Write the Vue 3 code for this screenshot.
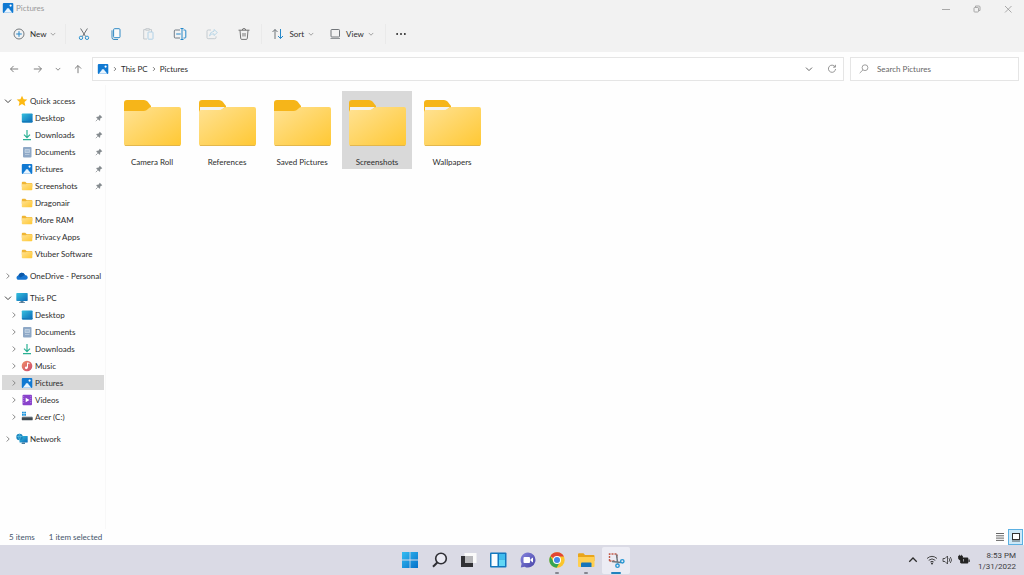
<script setup>
import { ref } from 'vue'

const search = ref('')
const selected = ref('Screenshots')

const tools = [
  { id: 'cut', label: 'Cut' },
  { id: 'copy', label: 'Copy' },
  { id: 'paste', label: 'Paste', off: true },
  { id: 'rename', label: 'Rename' },
  { id: 'share', label: 'Share', off: true },
  { id: 'trash', label: 'Delete' },
]

const groups = [
  {
    name: 'Quick access', icon: 'star', open: true,
    children: [
      { name: 'Desktop', icon: 'desktop', pin: true },
      { name: 'Downloads', icon: 'download', pin: true },
      { name: 'Documents', icon: 'document', pin: true },
      { name: 'Pictures', icon: 'picture', pin: true },
      { name: 'Screenshots', icon: 'folder', pin: true },
      { name: 'Dragonair', icon: 'folder' },
      { name: 'More RAM', icon: 'folder' },
      { name: 'Privacy Apps', icon: 'folder' },
      { name: 'Vtuber Software', icon: 'folder' },
    ],
  },
  { name: 'OneDrive - Personal', icon: 'cloud', children: [] },
  {
    name: 'This PC', icon: 'pc', open: true,
    children: [
      { name: 'Desktop', icon: 'desktop', more: true },
      { name: 'Documents', icon: 'document', more: true },
      { name: 'Downloads', icon: 'download', more: true },
      { name: 'Music', icon: 'music', more: true },
      { name: 'Pictures', icon: 'picture', more: true, current: true },
      { name: 'Videos', icon: 'video', more: true },
      { name: 'Acer (C:)', icon: 'drive', more: true },
    ],
  },
  { name: 'Network', icon: 'network', children: [] },
]

const folders = [
  { name: 'Camera Roll' },
  { name: 'References', paper: true },
  { name: 'Saved Pictures' },
  { name: 'Screenshots', paper: true },
  { name: 'Wallpapers', paper: true },
]

const apps = [
  { id: 'start', label: 'Start' },
  { id: 'find', label: 'Search' },
  { id: 'tasks', label: 'Task view' },
  { id: 'widgets', label: 'Widgets' },
  { id: 'chat', label: 'Chat' },
  { id: 'chrome', label: 'Chrome', running: true },
  { id: 'explorer', label: 'File Explorer', running: true },
  { id: 'snip', label: 'Snipping Tool', active: true },
]
</script>

<template>
  <div class="window">
    <svg class="sprite" width="0" height="0" aria-hidden="true">
      <defs>
        <linearGradient id="g-folder" x1="0" y1="0" x2="1" y2="1">
          <stop offset="0" stop-color="#ffe294" /><stop offset="1" stop-color="#ffc833" />
        </linearGradient>
        <linearGradient id="g-desk" x1="0" y1="0" x2="1" y2="1">
          <stop offset="0" stop-color="#35c1de" /><stop offset="1" stop-color="#0b69b8" />
        </linearGradient>
        <linearGradient id="g-music" x1="0" y1="0" x2="1" y2="1">
          <stop offset="0" stop-color="#f09068" /><stop offset="1" stop-color="#cc4a6e" />
        </linearGradient>
        <linearGradient id="g-win" x1="0" y1="0" x2="1" y2="1">
          <stop offset="0" stop-color="#35bdf2" /><stop offset="1" stop-color="#0470c9" />
        </linearGradient>
        <linearGradient id="g-chat" x1="0" y1="0" x2="1" y2="1">
          <stop offset="0" stop-color="#8483dd" /><stop offset="1" stop-color="#4a46a8" />
        </linearGradient>
      </defs>
      <symbol id="i-star" viewBox="0 0 12 12"><path d="M6 .8l1.6 3.4 3.7.4-2.8 2.5.8 3.8L6 9.1 2.7 10.9l.8-3.8L.7 4.6l3.7-.4z" fill="#fdb913" /></symbol>
      <symbol id="i-desktop" viewBox="0 0 12 12"><rect x=".8" y="1.5" width="10.8" height="9" rx=".8" fill="url(#g-desk)" /><path d="M1 9h10.500v.8q0 .7-.7.7H1.500z" fill="#1379b8" /></symbol>
      <symbol id="i-download" viewBox="0 0 12 12"><path d="M6 1v7.500M3 5.600l3 3 3-3M2 10.700h8" fill="none" stroke="#2ab093" stroke-width="1.200" /></symbol>
      <symbol id="i-document" viewBox="0 0 12 12"><rect x="2" y="1" width="8.500" height="10.500" rx="1" fill="#8ea8c6" /><path d="M4 3.500h4.500v3H4zM4 8.500h4.500" fill="#a9c0d8" stroke="#d0deeb" stroke-width=".6" /></symbol>
      <symbol id="i-picture" viewBox="0 0 12 12"><rect x=".8" y="1" width="10.500" height="10" rx="1" fill="#1079d2" /><path d="M1.800 10.800l3.400-4.300q.8-.8 1.600 0l3.500 4.300z" fill="#e8f5ff" /><circle cx="8.600" cy="3.600" r="1.100" fill="#fff" /></symbol>
      <symbol id="i-folder" viewBox="0 0 12 12"><path d="M.8 2.700q0-.9.9-.9h2.600l1.200 1.200h5q.8 0 .8.800v3H.8z" fill="#efb534" /><path d="M.8 4.200h4L6 3.400h4.500q.8 0 .8.800v5.200q0 .8-.8.800H1.600q-.8 0-.8-.8z" fill="url(#g-folder)" /></symbol>
      <symbol id="i-cloud" viewBox="0 0 12 12"><path d="M2.700 9.800C-.2 9.800-.2 5.600 2.700 5.500 3.400 2 7.800 1.800 8.800 5c3.800 0 3.800 4.800.6 4.800z" fill="#1675d1" /><path d="M2.200 5.600C3.500 1.500 8 2 8.800 5L4.300 7.600z" fill="#0c58a8" /></symbol>
      <symbol id="i-pc" viewBox="0 0 12 12"><rect x=".3" y="1" width="11.400" height="8" rx=".7" fill="url(#g-desk)" /><path d="M4.500 9h3v1.300H9V11H3v-.7h1.500z" fill="#587f9b" /></symbol>
      <symbol id="i-music" viewBox="0 0 12 12"><circle cx="6" cy="6" r="5.300" fill="url(#g-music)" /><path d="M6.500 7.800V2.800l2 .8" fill="none" stroke="#fff" stroke-width="1" /><circle cx="5.300" cy="7.800" r="1.400" fill="#fff" /></symbol>
      <symbol id="i-video" viewBox="0 0 12 12"><rect x="1.500" y=".8" width="9.500" height="10.400" rx="1" fill="#8942cb" /><path d="M2.700 2v8M9.800 2v8" stroke="#bb8be8" stroke-width=".8" stroke-dasharray="1 1" /><path d="M4.700 3.800L8.500 6 4.700 8.200z" fill="#fff" /></symbol>
      <symbol id="i-drive" viewBox="0 0 12 12"><path d="M1 .800h1.800v1.800H1zM3.200.8H5v1.800H3.200zM1 3h1.800v1.800H1zM3.200 3H5v1.800H3.200z" fill="#1993dd" /><path d="M1.500 5.500h9.500l.7 1H.8z" fill="#99a2a9" /><rect x=".8" y="6.300" width="10.900" height="2.900" rx=".4" fill="#3f4950" /></symbol>
      <symbol id="i-network" viewBox="0 0 12 12"><rect x="3.500" y="3" width="8.200" height="6.500" rx=".5" fill="url(#g-desk)" /><path d="M6 9.500h3V11H5.500z" fill="#487d9d" /><circle cx="3.500" cy="4" r="3.200" fill="#1783bd" /><path d="M.5 3.500h6M3.500.8q-2 3 0 6.400q2-3.400 0-6.400" fill="none" stroke="#63c6e8" stroke-width=".6" /></symbol>
      <symbol id="i-pin" viewBox="0 0 12 12"><path d="M7.200 1.200l3.700 3.600-.8.800-.8-.1-1.600 1.700.1 2-1 1-5-5 1-1 2 .1 1.700-1.700-.1-.7z" fill="#858b8f" /><path d="M4.200 7.800L1.200 10.800" stroke="#858b8f" stroke-width="1.100" /></symbol>
      <symbol id="i-down" viewBox="0 0 8 8"><path d="M1 2.600l3 3 3-3" fill="none" stroke="currentColor" stroke-width="1" /></symbol>
      <symbol id="i-right" viewBox="0 0 8 8"><path d="M2.700 1.500l2.500 2.500-2.500 2.500" fill="none" stroke="currentColor" stroke-width="1" /></symbol>
      <symbol id="i-new" viewBox="0 0 14 14"><circle cx="7" cy="7" r="5" fill="none" stroke="#686d72" stroke-width=".9" /><path d="M7 4.200v5.600M4.200 7h5.600" stroke="#2687c9" stroke-width="1" /></symbol>
      <symbol id="i-cut" viewBox="0 0 14 14"><path d="M3.600 1.500l5 8M10.400 1.500l-5 8" stroke="#5d6267" stroke-width=".9" /><g fill="none" stroke="#2d92cf" stroke-width="1"><circle cx="4" cy="10.800" r="1.700" /><circle cx="10" cy="10.800" r="1.700" /></g></symbol>
      <symbol id="i-copy" viewBox="0 0 14 14"><rect x="4.600" y="1.700" width="6.400" height="9" rx="1" fill="#fafafa" stroke="#2e89c5" stroke-width="1" /><path d="M3 3.300v7.200q0 2 2 2h4" fill="none" stroke="#3b8bc0" stroke-width="1" /></symbol>
      <symbol id="i-paste" viewBox="0 0 14 14"><path d="M6 12H2.700V2.600h2M8.500 2.600h2V5M4.800 1.700h3.600v1.500H4.800z" fill="none" stroke="#bfc5c9" stroke-width=".9" /><rect x="7" y="5" width="5" height="7.200" rx=".6" fill="none" stroke="#a8cde5" stroke-width=".9" /></symbol>
      <symbol id="i-rename" viewBox="0 0 14 14"><path d="M7 3H2.300q-1 0-1 1v6q0 1 1 1H7" fill="none" stroke="#65717a" stroke-width=".9" /><path d="M10.500 3H12q.8 0 .8.800v6.400q0 .8-.8.800h-1.500M9 1.500v11M7.500 1.500h3M7.500 12.500h3M3.200 7h4.500" fill="none" stroke="#2488ca" stroke-width="1" /></symbol>
      <symbol id="i-share" viewBox="0 0 14 14"><path d="M6 3H3.200q-1.200 0-1.200 1.200v6.300q0 1.200 1.200 1.200h6.600q1.200 0 1.200-1.200V9.400" fill="none" stroke="#bec6cc" stroke-width=".9" /><path d="M9 2.500l3.400 3L9 8.500V6.800Q6 6.600 4.500 8.900 4.800 4.800 9 4.200z" fill="none" stroke="#add0e5" stroke-width=".8" /></symbol>
      <symbol id="i-trash" viewBox="0 0 14 14"><path d="M1.500 3.200h11M5.300 3.200q0-1.700 1.700-1.700t1.700 1.700M3 3.400l.7 8q.1 1 1.100 1h4.400q1 0 1.100-1l.7-8M6 6v3.500M8 6v3.500" fill="none" stroke="#666" stroke-width=".9" /></symbol>
      <symbol id="i-sort" viewBox="0 0 14 14"><path d="M4 12V2.500M1.500 5L4 2.500 6.500 5" fill="none" stroke="#60676c" stroke-width=".9" /><path d="M9.500 2v9.500M7 9l2.500 2.500L12 9" fill="none" stroke="#2688c9" stroke-width="1" /></symbol>
      <symbol id="i-view" viewBox="0 0 14 14"><rect x="3" y="2.500" width="8.500" height="7.500" rx=".8" fill="none" stroke="#62676b" stroke-width=".9" /><path d="M2.500 11.500h9.500" stroke="#777c80" stroke-width=".8" /></symbol>
      <symbol id="i-dots" viewBox="0 0 14 14"><g fill="#252525"><circle cx="2.500" cy="7" r="1.100" /><circle cx="7" cy="7" r="1.100" /><circle cx="11.500" cy="7" r="1.100" /></g></symbol>
      <symbol id="i-arrow" viewBox="0 0 12 12"><path d="M11 6H2M5.500 2.300L1.800 6l3.700 3.700" fill="none" stroke="currentColor" stroke-width="1" /></symbol>
      <symbol id="i-refresh" viewBox="0 0 12 12"><path d="M9.600 3.300A4.300 4.300 0 1 0 10.300 6M10.100 1v2.800H7.300" fill="none" stroke="#737373" stroke-width=".9" /></symbol>
      <symbol id="i-lens" viewBox="0 0 12 12"><circle cx="7" cy="4.700" r="2.900" fill="none" stroke="#888" stroke-width=".8" /><path d="M5 6.800l-3.300 3.300" stroke="#888" stroke-width=".8" /></symbol>
      <symbol id="i-start" viewBox="0 0 20 20"><path d="M2 2h7.600v7.600H2zM10.400 2H18v7.600h-7.600zM2 10.400h7.600V18H2zM10.400 10.400H18V18h-7.600z" fill="url(#g-win)" /></symbol>
      <symbol id="i-find" viewBox="0 0 20 20"><circle cx="11" cy="8.500" r="5.300" fill="#e9e9f2" stroke="#2e2e34" stroke-width="1.600" /><path d="M7.300 12.500L3 16.800" stroke="#2e2e34" stroke-width="2" /></symbol>
      <symbol id="i-tasks" viewBox="0 0 20 20"><rect x="5.500" y="3" width="12" height="10" fill="#fafafa" /><path d="M5.500 6H14v7H5.500z" fill="#b7b7ba" /><path d="M2 6h4v7h8v4H2z" fill="#303034" /></symbol>
      <symbol id="i-widgets" viewBox="0 0 20 20"><rect x="2" y="2.500" width="16.500" height="15" rx="1" fill="#1277be" /><rect x="3.500" y="4" width="6" height="12" fill="#fafdff" /><path d="M11 4h6v5.500h-6z" fill="#40bced" /><path d="M11 9.500h6V16h-6z" fill="#61d7f5" /></symbol>
      <symbol id="i-chat" viewBox="0 0 20 20"><path d="M10 2.500a7.500 7.500 0 1 1-3.400 14.200L2.800 17.500l.8-3.700A7.500 7.500 0 0 1 10 2.500z" fill="url(#g-chat)" /><rect x="5.500" y="7" width="6.500" height="6" rx="1" fill="#fff" /><path d="M12.500 9.200l2.500-1.800v5.200l-2.500-1.800z" fill="#fff" /></symbol>
      <symbol id="i-chrome" viewBox="0 0 20 20"><circle cx="10" cy="10" r="7.700" fill="#fbc52c" /><path d="M10 10L3.300 6.200A7.700 7.700 0 0 1 17 6.500H10z" fill="#e24434" /><path d="M3.300 6.200A7.700 7.700 0 0 0 9.600 17.700L13 12l-5.800 1z" fill="#36a554" /><circle cx="10" cy="10" r="4" fill="#fff" /><circle cx="10" cy="10" r="3" fill="#4287e8" /></symbol>
      <symbol id="i-explorer" viewBox="0 0 20 20"><path d="M2 4.200q0-1 1-1h4.500L9 5h8.500q1 0 1 1v5H2z" fill="#e9a51b" /><path d="M2 7h16.500v9q0 1-1 1H3q-1 0-1-1z" fill="#ffcf51" /><path d="M5 17v-3.500q0-1 1-1h8.500q1 0 1 1V17z" fill="#1474bb" /></symbol>
      <symbol id="i-snip" viewBox="0 0 20 20"><path d="M3.500 11V4h7.500v4M3.500 11h5" fill="none" stroke="#c25a49" stroke-width="1.400" stroke-dasharray="2 1" /><path d="M10.500 4.500l1.200 9M6 11.500l9 1" fill="none" stroke="#6e777e" stroke-width="1.500" /><g fill="none" stroke="#2696d3" stroke-width="1.400"><circle cx="16.300" cy="11.300" r="1.700" /><circle cx="11.500" cy="15.700" r="1.700" /></g></symbol>
      <symbol id="i-wifi" viewBox="0 0 12 12"><path d="M1 4.500q5-4.300 10 0M2.700 6.300q3.300-2.800 6.600 0M4.300 8q1.700-1.400 3.400 0" fill="none" stroke="#333" stroke-width=".9" /><circle cx="6" cy="9.600" r="1" fill="#333" /></symbol>
      <symbol id="i-sound" viewBox="0 0 12 12"><path d="M1 4.500h2L5.500 2v8L3 7.500H1zM7 4.200q1.500 1.800 0 3.600M8.300 3q2.600 3 0 6" fill="none" stroke="#333" stroke-width=".8" /></symbol>
      <symbol id="i-battery" viewBox="0 0 12 12"><rect x="2.500" y="3.500" width="7.800" height="6" rx="1" fill="#222" /><path d="M10.500 5.500h1.200V8h-1.200z" fill="#222" /><path d="M.5 2h4v2.500q-.5 1.500-2 1.500t-2-1.500zM1.500.8V2M3.500.8V2M2.500 6v3" fill="#222" stroke="#222" stroke-width=".7" /><path d="M5.500 5v2.500" stroke="#c9c9d0" stroke-width=".7" /></symbol>
    </svg>

    <header class="chrome">
      <div class="titlebar">
        <svg class="ic12"><use href="#i-picture" /></svg>
        <h1>Pictures</h1>
        <div class="caption">
          <button aria-label="Minimize"><svg class="ic12" viewBox="0 0 12 12"><path d="M2 6.500h8" /></svg></button>
          <button aria-label="Restore"><svg class="ic12" viewBox="0 0 12 12"><rect x="3" y="4.500" width="4.500" height="4.500" rx=".7" /><path d="M4.500 4V3h3.500q1 0 1 1v3.500H8" /></svg></button>
          <button aria-label="Close"><svg class="ic12" viewBox="0 0 12 12"><path d="M3 3l6.500 6.500M9.500 3L3 9.500" /></svg></button>
        </div>
      </div>
      <div class="toolbar">
        <button class="wide"><svg class="ic14"><use href="#i-new" /></svg>New<svg class="ic6"><use href="#i-down" /></svg></button>
        <i class="rule"></i>
        <button v-for="t in tools" :key="t.id" class="tool" :aria-label="t.label" :disabled="t.off">
          <svg class="ic14"><use :href="'#i-' + t.id" /></svg>
        </button>
        <i class="rule"></i>
        <button class="wide"><svg class="ic14"><use href="#i-sort" /></svg>Sort<svg class="ic6"><use href="#i-down" /></svg></button>
        <button class="wide"><svg class="ic14"><use href="#i-view" /></svg>View<svg class="ic6"><use href="#i-down" /></svg></button>
        <i class="rule"></i>
        <button class="tool" aria-label="See more"><svg class="ic12"><use href="#i-dots" /></svg></button>
      </div>
    </header>

    <nav class="address" aria-label="Location">
      <div class="history">
        <button aria-label="Back"><svg class="ic10"><use href="#i-arrow" /></svg></button>
        <button aria-label="Forward"><svg class="ic10 flip"><use href="#i-arrow" /></svg></button>
        <button aria-label="Recent locations"><svg class="ic6"><use href="#i-down" /></svg></button>
        <button aria-label="Up"><svg class="ic10 up"><use href="#i-arrow" /></svg></button>
      </div>
      <div class="path">
        <svg class="ic12"><use href="#i-picture" /></svg>
        <svg class="ic6"><use href="#i-right" /></svg>
        <a href="#pc">This PC</a>
        <svg class="ic6"><use href="#i-right" /></svg>
        <a href="#pictures">Pictures</a>
        <button class="first" aria-label="Previous locations"><svg class="ic8"><use href="#i-down" /></svg></button>
        <button aria-label="Refresh"><svg class="ic10"><use href="#i-refresh" /></svg></button>
      </div>
      <label class="search">
        <svg class="ic12"><use href="#i-lens" /></svg>
        <input v-model="search" type="text" placeholder="Search Pictures" aria-label="Search Pictures" />
      </label>
    </nav>

    <div class="body">
      <aside class="tree">
        <ul>
          <li v-for="g in groups" :key="g.name">
            <a class="row" href="#">
              <svg class="ic8 twist" :class="{ open: g.open }"><use :href="g.open ? '#i-down' : '#i-right'" /></svg>
              <svg class="ic12"><use :href="'#i-' + g.icon" /></svg>
              <span>{{ g.name }}</span>
            </a>
            <ul v-if="g.children.length" class="sub">
              <li v-for="c in g.children" :key="c.name">
                <a class="row" :class="{ current: c.current }" href="#">
                  <svg class="ic8 twist"><use v-if="c.more" href="#i-right" /></svg>
                  <svg class="ic12"><use :href="'#i-' + c.icon" /></svg>
                  <span>{{ c.name }}</span>
                  <svg v-if="c.pin" class="ic8 pin"><use href="#i-pin" /></svg>
                </a>
              </li>
            </ul>
          </li>
        </ul>
      </aside>
      <main class="files">
        <button v-for="f in folders" :key="f.name" class="tile" :class="{ selected: f.name === selected }" @click="selected = f.name">
          <svg class="big" viewBox="0 0 57 46" aria-hidden="true">
            <path d="M0 3q0-3 3-3h17q2 0 3.500 1.500L27 6v8H0z" fill="#f6b519" />
            <path v-if="f.paper" d="M1 7h25l-5 4H1z" fill="#f3f3f3" />
            <path :d="f.paper ? 'M0 12q0-2 2-2h18q2 0 4-1.500l1-.8q1-.7 3-.7h27q2 0 2 2v35q0 2-2 2H2q-2 0-2-2z' : 'M0 11h20q2 0 4-2l1-1q1-1 3-1h27q2 0 2 2v35q0 2-2 2H2q-2 0-2-2z'" fill="url(#g-folder)" />
            <path d="M1 45.500h55" stroke="#dcb04a" stroke-width=".8" />
          </svg>
          <span>{{ f.name }}</span>
        </button>
      </main>
    </div>

    <footer class="status">
      <span>5 items</span><span>1 item selected</span>
      <div class="modes">
        <button aria-label="Details"><svg class="ic12" viewBox="0 0 12 12"><path d="M2 2.500h8M2 4.800h8M2 7.100h8M2 9.400h8" stroke="#555" stroke-width=".9" /></svg></button>
        <button class="on" aria-label="Large icons"><svg class="ic12" viewBox="0 0 12 12"><rect x="2.500" y="2.500" width="7" height="6" fill="#fff" stroke="#333" /><path d="M2 10h8" stroke="#333" stroke-width=".8" /></svg></button>
      </div>
    </footer>

    <div class="taskbar">
      <div class="apps">
        <button v-for="a in apps" :key="a.id" :class="{ active: a.active, running: a.running }" :aria-label="a.label">
          <svg class="ic20"><use :href="'#i-' + a.id" /></svg>
        </button>
      </div>
      <div class="tray">
        <button aria-label="Hidden icons"><svg class="ic10 turn"><use href="#i-down" /></svg></button>
        <button class="quick" aria-label="Network, volume, battery">
          <svg class="ic12"><use href="#i-wifi" /></svg>
          <svg class="ic12"><use href="#i-sound" /></svg>
          <svg class="ic12"><use href="#i-battery" /></svg>
        </button>
        <time datetime="2022-01-31T20:53">8:53 PM<br />1/31/2022</time>
      </div>
    </div>
  </div>
</template>

<style>
body { background: #fefefe; }
</style>

<style scoped>
.window { display: flex; flex-direction: column; min-height: 100vh; font: 8px/12px Lato, "Open Sans", sans-serif; color: #2c2c2c; background: #fefefe; }
.window * { box-sizing: border-box; }
.sprite { position: absolute; }
svg { display: block; flex: none; overflow: visible; }
button { display: flex; align-items: center; justify-content: center; padding: 0; border: 0; background: none; font: inherit; color: inherit; }
a { color: inherit; text-decoration: none; }
ul { margin: 0; padding: 0; list-style: none; }
.ic6 { width: 6px; height: 6px; }
.ic8 { width: 8px; height: 8px; }
.ic10 { width: 10px; height: 10px; }
.ic12 { width: 12px; height: 12px; }
.ic14 { width: 14px; height: 14px; }
.ic20 { width: 20px; height: 20px; }
.flip { transform: rotate(180deg); }
.up { transform: rotate(90deg); }
.turn { transform: rotate(180deg); }

.chrome { background: #f2f2f2; }
.titlebar { display: flex; align-items: flex-start; height: 16px; padding: 2px 1px 0 2px; }
.titlebar h1 { margin: 0 0 0 2px; font-size: 8px; line-height: 12px; font-weight: 400; color: #999; }
.caption { display: flex; margin-left: auto; }
.caption button { width: 31px; height: 14px; }
.caption svg { fill: none; stroke: #969696; stroke-width: .8; }
.toolbar { display: flex; align-items: center; height: 36px; padding-left: 7px; }
.wide { gap: 4px; height: 24px; padding: 0 5px; }
.wide .ic6 { color: #888; }
.rule { width: 1px; height: 20px; margin: 0 1px; background: #eaeaea; }
.rule:nth-of-type(1) { margin-left: 4px; margin-right: 2px; }
.rule + .wide { padding-left: 8px; }
.wide + .wide { padding-left: 9px; }
.wide + .rule:last-of-type { margin-left: 6px; }
.tool { width: 32px; height: 24px; }
.rule:last-of-type + .tool { width: 28px; }

.address { display: flex; align-items: center; padding: 5px 5px 4px; height: 33px; }
.history { display: grid; grid-template-columns: 18px 30px 10px 29px; height: 22px; color: #666; }
.path, .search { display: flex; align-items: center; height: 24px; border: 1px solid #e5e5e5; background: #fff; }
.path { flex: 1; gap: 3px; padding: 0 5px 0 4px; }
.path .ic6 { color: #555; }
.path .first { margin-left: auto; margin-right: 8px; }
.path button { width: 12px; height: 20px; color: #666; }
.search { flex: 0 0 169px; gap: 7px; margin-left: 6px; padding: 0 7px; }
.search input { flex: 1; min-width: 0; padding: 0; border: 0; outline: 0; background: none; font: inherit; color: #666; }
.search input::placeholder { color: #666; opacity: 1; }

.body { display: flex; flex: 1; }
.tree { flex: 0 0 106px; padding: 7px 1px 0 2px; border-right: 1px solid #f8f8f8; }
.tree > ul { display: flex; flex-direction: column; gap: 5px; }
.row { display: flex; align-items: center; height: 17px; padding-left: 2px; white-space: nowrap; }
.row .twist { margin-right: 4px; color: #888; }
.row .open { color: #444; }
.row .ic12 { margin-right: 2px; }
.sub .row { padding-left: 8px; border: solid transparent; border-width: 1px 0; background-clip: padding-box; }
.sub .row .twist { margin-right: 3px; }
.current { background-color: #d9d9d9; }
.pin { margin: 0 1px 0 auto; }
.files { display: flex; flex-wrap: wrap; align-content: flex-start; gap: 5px; flex: 1; padding: 6px 11px; }
.tile { flex-direction: column; justify-content: flex-start; width: 70px; height: 78px; padding-top: 9px; }
.big { width: 57px; height: 46px; margin-bottom: 10px; }
.selected { background: #d9d9d9; }

.status { display: flex; align-items: flex-start; gap: 14px; height: 16px; padding-left: 9px; line-height: 16px; color: #44546a; }
.modes { display: flex; margin-left: auto; gap: 1px; padding-right: 1px; }
.modes button { width: 15px; height: 16px; }
.modes .on { border: 1px solid #5bb0e2; background: #cce9f9; }
.taskbar { display: grid; grid-template-columns: 1fr auto 1fr; align-items: center; height: 30px; padding-left: 2px; background: #dadae5; }
.apps { grid-column: 2; display: grid; grid-template-columns: repeat(8, 1fr); width: 235px; }
.apps button { position: relative; height: 27px; margin: 0 1px; border-radius: 2px; }
.apps .active { background: #ececf4; }
.apps .running::after, .apps .active::after { content: ""; position: absolute; bottom: 0; left: 50%; width: 4px; height: 2px; margin-left: -2px; border-radius: 1px; background: #85858e; }
.apps .active::after { width: 10px; margin-left: -5px; background: #2183be; }
.tray { display: flex; align-items: center; justify-content: flex-end; gap: 8px; padding-right: 8px; }
.quick { gap: 4px; }
.tray time { padding-top: 1px; text-align: right; font-family: Roboto, sans-serif; line-height: 11px; color: #3c3c42; }
</style>
